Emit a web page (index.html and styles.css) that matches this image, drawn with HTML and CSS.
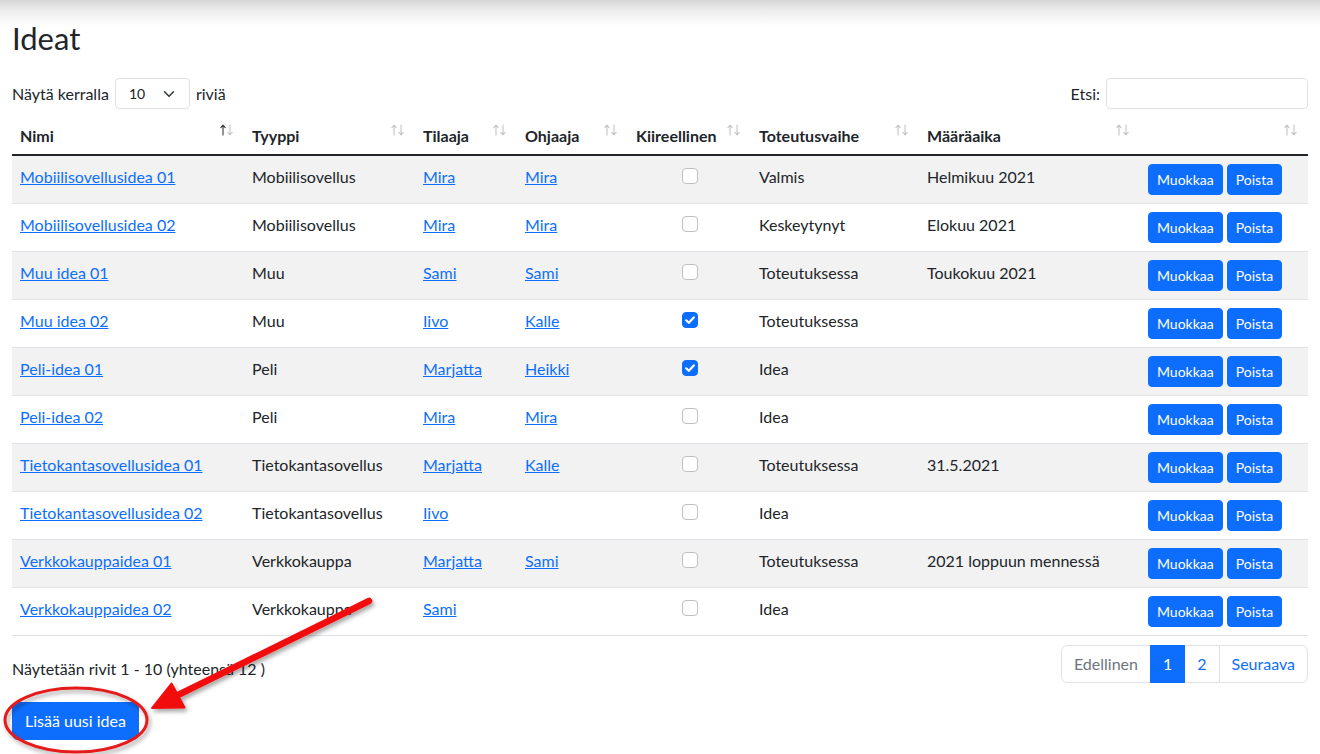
FILE: index.html
```html
<!DOCTYPE html>
<html lang="fi">
<head>
<meta charset="utf-8">
<title>Ideat</title>
<link rel="stylesheet" href="styles.css">
</head>
<body>
<div class="page">
  <h1 class="title">Ideat</h1>
  <div class="controls">
    <div class="length">Näytä kerralla
      <span class="select">10
        <svg class="chev" width="12" height="8" viewBox="0 0 12 8"><path d="M1.5 1.8 L6 6.2 L10.5 1.8" fill="none" stroke="#343a40" stroke-width="1.6" stroke-linecap="round" stroke-linejoin="round"/></svg>
      </span> riviä</div>
    <div class="search">Etsi: <span class="input"></span></div>
  </div>

  <table class="ideas">
    <colgroup>
      <col class="c1"><col class="c2"><col class="c3"><col class="c4"><col class="c5"><col class="c6"><col class="c7"><col class="c8">
    </colgroup>
    <thead>
      <tr>
        <th><div class="th"><span>Nimi</span><svg class="sort asc" width="14" height="12" viewBox="0 0 14 12"><path class="up" d="M3 11V1.2M0.8 3.6L3 1.2L5.2 3.6"/><path class="down" d="M10 1V10.8M7.8 8.4L10 10.8L12.2 8.4"/></svg></div></th>
        <th><div class="th"><span>Tyyppi</span><svg class="sort" width="14" height="12" viewBox="0 0 14 12"><path class="up" d="M3 11V1.2M0.8 3.6L3 1.2L5.2 3.6"/><path class="down" d="M10 1V10.8M7.8 8.4L10 10.8L12.2 8.4"/></svg></div></th>
        <th><div class="th"><span>Tilaaja</span><svg class="sort" width="14" height="12" viewBox="0 0 14 12"><path class="up" d="M3 11V1.2M0.8 3.6L3 1.2L5.2 3.6"/><path class="down" d="M10 1V10.8M7.8 8.4L10 10.8L12.2 8.4"/></svg></div></th>
        <th><div class="th"><span>Ohjaaja</span><svg class="sort" width="14" height="12" viewBox="0 0 14 12"><path class="up" d="M3 11V1.2M0.8 3.6L3 1.2L5.2 3.6"/><path class="down" d="M10 1V10.8M7.8 8.4L10 10.8L12.2 8.4"/></svg></div></th>
        <th><div class="th"><span>Kiireellinen</span><svg class="sort" width="14" height="12" viewBox="0 0 14 12"><path class="up" d="M3 11V1.2M0.8 3.6L3 1.2L5.2 3.6"/><path class="down" d="M10 1V10.8M7.8 8.4L10 10.8L12.2 8.4"/></svg></div></th>
        <th><div class="th"><span>Toteutusvaihe</span><svg class="sort" width="14" height="12" viewBox="0 0 14 12"><path class="up" d="M3 11V1.2M0.8 3.6L3 1.2L5.2 3.6"/><path class="down" d="M10 1V10.8M7.8 8.4L10 10.8L12.2 8.4"/></svg></div></th>
        <th><div class="th"><span>Määräaika</span><svg class="sort" width="14" height="12" viewBox="0 0 14 12"><path class="up" d="M3 11V1.2M0.8 3.6L3 1.2L5.2 3.6"/><path class="down" d="M10 1V10.8M7.8 8.4L10 10.8L12.2 8.4"/></svg></div></th>
        <th><div class="th"><span></span><svg class="sort" width="14" height="12" viewBox="0 0 14 12"><path class="up" d="M3 11V1.2M0.8 3.6L3 1.2L5.2 3.6"/><path class="down" d="M10 1V10.8M7.8 8.4L10 10.8L12.2 8.4"/></svg></div></th>
      </tr>
    </thead>
    <tbody>
      <tr>
        <td><a href="#">Mobiilisovellusidea 01</a></td><td>Mobiilisovellus</td><td><a href="#">Mira</a></td><td><a href="#">Mira</a></td>
        <td class="chk"><span class="cb"></span></td><td>Valmis</td><td>Helmikuu 2021</td>
        <td><span class="btn sm">Muokkaa</span><span class="btn sm">Poista</span></td>
      </tr>
      <tr>
        <td><a href="#">Mobiilisovellusidea 02</a></td><td>Mobiilisovellus</td><td><a href="#">Mira</a></td><td><a href="#">Mira</a></td>
        <td class="chk"><span class="cb"></span></td><td>Keskeytynyt</td><td>Elokuu 2021</td>
        <td><span class="btn sm">Muokkaa</span><span class="btn sm">Poista</span></td>
      </tr>
      <tr>
        <td><a href="#">Muu idea 01</a></td><td>Muu</td><td><a href="#">Sami</a></td><td><a href="#">Sami</a></td>
        <td class="chk"><span class="cb"></span></td><td>Toteutuksessa</td><td>Toukokuu 2021</td>
        <td><span class="btn sm">Muokkaa</span><span class="btn sm">Poista</span></td>
      </tr>
      <tr>
        <td><a href="#">Muu idea 02</a></td><td>Muu</td><td><a href="#">Iivo</a></td><td><a href="#">Kalle</a></td>
        <td class="chk"><span class="cb on"><svg width="16" height="16" viewBox="0 0 16 16"><path d="M4.2 8.3L6.8 10.8L11.8 5.4" fill="none" stroke="#fff" stroke-width="2.2" stroke-linecap="round" stroke-linejoin="round"/></svg></span></td><td>Toteutuksessa</td><td></td>
        <td><span class="btn sm">Muokkaa</span><span class="btn sm">Poista</span></td>
      </tr>
      <tr>
        <td><a href="#">Peli-idea 01</a></td><td>Peli</td><td><a href="#">Marjatta</a></td><td><a href="#">Heikki</a></td>
        <td class="chk"><span class="cb on"><svg width="16" height="16" viewBox="0 0 16 16"><path d="M4.2 8.3L6.8 10.8L11.8 5.4" fill="none" stroke="#fff" stroke-width="2.2" stroke-linecap="round" stroke-linejoin="round"/></svg></span></td><td>Idea</td><td></td>
        <td><span class="btn sm">Muokkaa</span><span class="btn sm">Poista</span></td>
      </tr>
      <tr>
        <td><a href="#">Peli-idea 02</a></td><td>Peli</td><td><a href="#">Mira</a></td><td><a href="#">Mira</a></td>
        <td class="chk"><span class="cb"></span></td><td>Idea</td><td></td>
        <td><span class="btn sm">Muokkaa</span><span class="btn sm">Poista</span></td>
      </tr>
      <tr>
        <td><a href="#">Tietokantasovellusidea 01</a></td><td>Tietokantasovellus</td><td><a href="#">Marjatta</a></td><td><a href="#">Kalle</a></td>
        <td class="chk"><span class="cb"></span></td><td>Toteutuksessa</td><td>31.5.2021</td>
        <td><span class="btn sm">Muokkaa</span><span class="btn sm">Poista</span></td>
      </tr>
      <tr>
        <td><a href="#">Tietokantasovellusidea 02</a></td><td>Tietokantasovellus</td><td><a href="#">Iivo</a></td><td></td>
        <td class="chk"><span class="cb"></span></td><td>Idea</td><td></td>
        <td><span class="btn sm">Muokkaa</span><span class="btn sm">Poista</span></td>
      </tr>
      <tr>
        <td><a href="#">Verkkokauppaidea 01</a></td><td>Verkkokauppa</td><td><a href="#">Marjatta</a></td><td><a href="#">Sami</a></td>
        <td class="chk"><span class="cb"></span></td><td>Toteutuksessa</td><td>2021 loppuun mennessä</td>
        <td><span class="btn sm">Muokkaa</span><span class="btn sm">Poista</span></td>
      </tr>
      <tr>
        <td><a href="#">Verkkokauppaidea 02</a></td><td>Verkkokauppa</td><td><a href="#">Sami</a></td><td></td>
        <td class="chk"><span class="cb"></span></td><td>Idea</td><td></td>
        <td><span class="btn sm">Muokkaa</span><span class="btn sm">Poista</span></td>
      </tr>
    </tbody>
  </table>

  <div class="footer">
    <div class="info">Näytetään rivit 1 - 10 (yhteensä 12 )</div>
    <ul class="pagination">
      <li class="pg disabled">Edellinen</li>
      <li class="pg active">1</li>
      <li class="pg">2</li>
      <li class="pg">Seuraava</li>
    </ul>
  </div>

  <span class="btn add">Lisää uusi idea</span>
</div>

<svg class="annot" width="1320" height="754" viewBox="0 0 1320 754">
  <defs>
    <filter id="sh" x="-10%" y="-10%" width="130%" height="130%">
      <feDropShadow dx="2" dy="3" stdDeviation="2.2" flood-color="#000" flood-opacity="0.35"/>
    </filter>
  </defs>
  <g filter="url(#sh)">
    <ellipse cx="76" cy="720" rx="71" ry="32" fill="none" stroke="#e51a1a" stroke-width="3"/>
    <line x1="369" y1="601" x2="176" y2="696" stroke="#f20d0d" stroke-width="6.5" stroke-linecap="round"/>
    <path d="M152 708 L171.5 683.5 L184.5 707.5 Z" fill="#f20d0d" stroke="#f20d0d" stroke-width="2" stroke-linejoin="round"/>
  </g>
</svg>
</body>
</html>
```

FILE: styles.css
```css
* { box-sizing: border-box; }

html, body {
  margin: 0;
  padding: 0;
}

body {
  font-family: Lato, "Noto Sans", sans-serif;
  font-size: 16px;
  line-height: 24px;
  color: #212529;
  background: #fff linear-gradient(#d6d6d6, #ececec 10px, #fff 26px) no-repeat;
  background-size: 100% 26px;
  width: 1320px;
  height: 754px;
  overflow: hidden;
  position: relative;
}

.page {
  padding: 0 12px;
}

.title {
  margin: 21px 0 0;
  font-size: 31px;
  font-weight: 400;
  line-height: 34px;
}

.controls {
  margin-top: 23px;
  display: flex;
  justify-content: space-between;
  align-items: center;
  height: 31px;
}

.length, .search {
  display: flex;
  align-items: center;
  gap: 6px;
}

.select {
  display: inline-flex;
  align-items: center;
  justify-content: space-between;
  width: 75px;
  height: 31px;
  padding: 0 14px 0 13px;
  border: 1px solid #dee2e6;
  border-radius: 4px;
  font-size: 14px;
}

.input {
  display: inline-block;
  width: 202px;
  height: 31px;
  border: 1px solid #dee2e6;
  border-radius: 4px;
  background: #fff;
}

.ideas {
  margin-top: 7px;
  width: 1296px;
  border-collapse: collapse;
  table-layout: fixed;
}

.c1 { width: 232px; }
.c2 { width: 171px; }
.c3 { width: 102px; }
.c4 { width: 111px; }
.c5 { width: 123px; }
.c6 { width: 168px; }
.c7 { width: 221px; }
.c8 { width: 168px; }

.ideas th {
  padding: 8px 10px 6px 8px;
  text-align: left;
  font-weight: 700;
  border-bottom: 2px solid #212529;
  vertical-align: top;
}

.th {
  display: flex;
  justify-content: space-between;
  align-items: flex-start;
}

.sort {
  margin-top: 0px;
  flex: none;
}
.sort path {
  fill: none;
  stroke: #c4c4c4;
  stroke-width: 1.1;
  stroke-linecap: round;
  stroke-linejoin: round;
}
.sort.asc .up { stroke: #3a3a3a; }

.ideas td {
  padding: 9px 8px 7px;
  vertical-align: top;
  border-bottom: 1px solid #dee2e6;
  height: 48px;
  white-space: nowrap;
}

.ideas tbody tr:nth-child(odd) td {
  background: #f2f2f2;
}

.ideas a {
  color: #0d6efd;
  text-decoration: underline;
}

.chk { text-align: center; }

.cb {
  display: inline-block;
  width: 16px;
  height: 16px;
  margin-top: 3px;
  vertical-align: top;
  border: 1px solid #c0c0c0;
  border-radius: 4px;
  background: #fff;
}
.cb.on {
  background: #0d6efd;
  border-color: #0d6efd;
}
.cb svg {
  display: block;
  margin: -1px;
}

.btn {
  display: inline-block;
  background: #0d6efd;
  color: #fff;
  border: 1px solid #0d6efd;
}

.btn.sm {
  font-size: 14px;
  line-height: 21px;
  padding: 4px 8px;
  border-radius: 4px;
  margin-right: 4px;
  margin-top: -1px;
}

.footer {
  margin-top: 9px;
  display: flex;
  justify-content: space-between;
  align-items: flex-start;
}

.info {
  padding-top: 12px;
}

.pagination {
  list-style: none;
  margin: 0;
  padding: 0;
  display: flex;
}

.pg {
  padding: 6px 12px;
  border: 1px solid #dee2e6;
  margin-left: -1px;
  color: #0d6efd;
  background: #fff;
}
.pg:first-child {
  margin-left: 0;
  border-radius: 6px 0 0 6px;
}
.pg:last-child {
  border-radius: 0 6px 6px 0;
}
.pg.disabled { color: #6c757d; }
.pg.active {
  background: #0d6efd;
  border-color: #0d6efd;
  color: #fff;
  position: relative;
}

.btn.add {
  margin-top: 19px;
  padding: 6px 12px;
  border-radius: 6px;
}

.annot {
  position: absolute;
  left: 0;
  top: 0;
  pointer-events: none;
}
```
